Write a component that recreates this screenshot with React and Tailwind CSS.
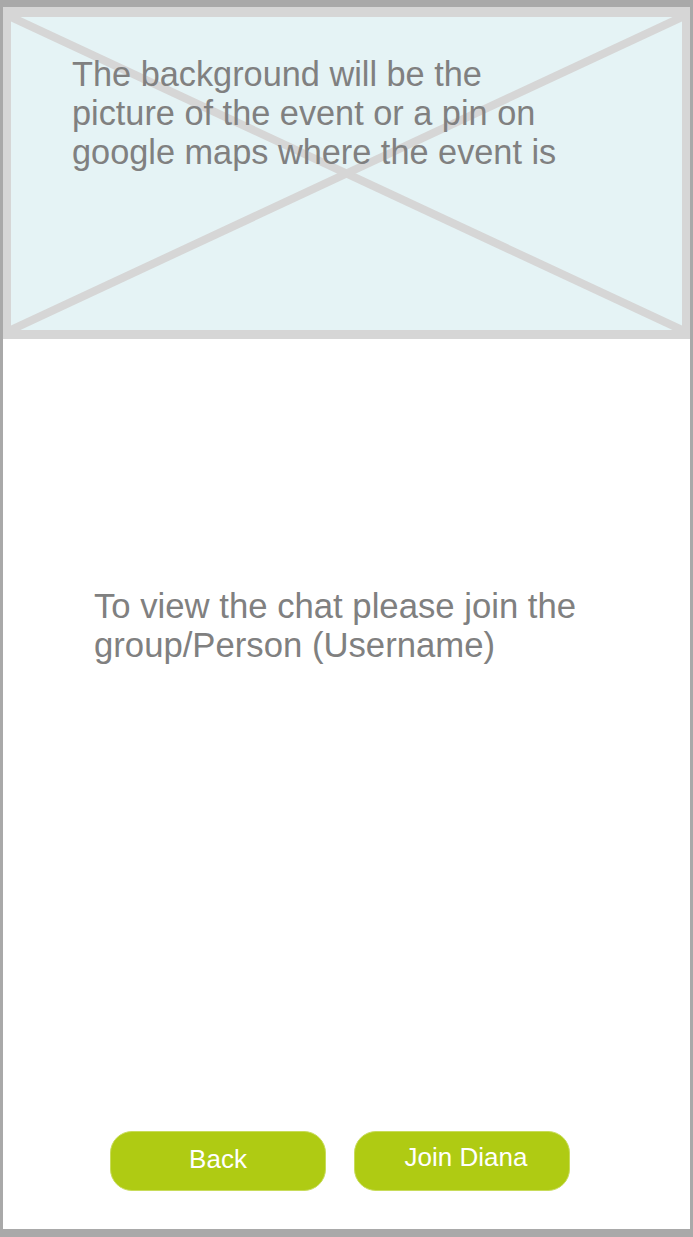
import React from 'react';

// Event chat locked screen (wireframe)
export default function App() {
  return (
    <div className="h-[1237px] w-[693px] bg-[#a9a9a9] pt-[7px] pl-[3px] pr-[3px] pb-[8px] font-['Liberation_Sans',Arial,sans-serif]">
      <div className="flex h-full flex-col bg-white">
        {/* image placeholder */}
        <div className="relative h-[332px] border-[#d6d6d6] border-t-[10px] border-x-[8px] border-b-[9px] bg-[#e5f3f5]">
          <svg className="absolute inset-0 h-full w-full" viewBox="0 0 671 313" preserveAspectRatio="none">
            <line x1="0" y1="0" x2="671" y2="313" stroke="#d6d6d6" strokeWidth="8" />
            <line x1="671" y1="0" x2="0" y2="313" stroke="#d6d6d6" strokeWidth="8" />
          </svg>
          <p className="relative pl-[61px] pt-[38px] text-[34.3px] leading-[39px] text-[#808080]">
            The background will be the<br />
            picture of the event or a pin on<br />
            google maps where the event is
          </p>
        </div>

        <div className="flex flex-1 flex-col">
          <p className="pl-[91px] pt-[248px] text-[34.7px] leading-[39px] text-[#808080]">
            To view the chat please join the<br />
            group/Person (Username)
          </p>
        </div>

        <div className="flex gap-[28px] pl-[107px] pb-[38px]">
          <button className="h-[60px] w-[216px] rounded-[22px] border border-[#c8dc5a] bg-[#afcb13] pb-[4px] text-[26px] text-white">
            Back
          </button>
          <button className="h-[60px] w-[216px] rounded-[22px] border border-[#c8dc5a] bg-[#afcb13] pb-[8px] pl-[8px] text-[26px] text-white">
            Join Diana
          </button>
        </div>
      </div>
    </div>
  );
}
